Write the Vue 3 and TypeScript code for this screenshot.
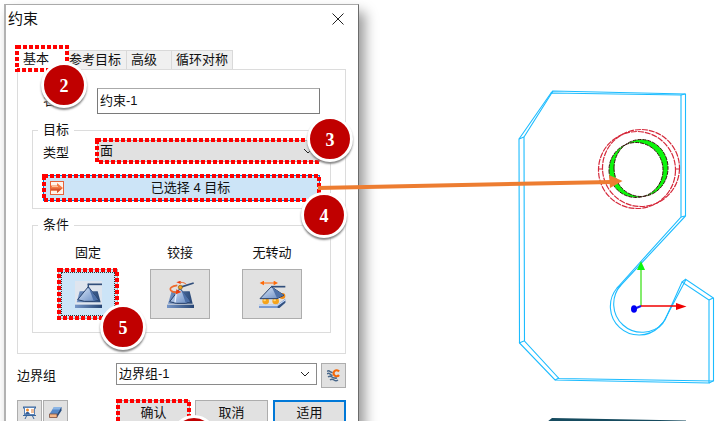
<script setup lang="ts">
import { ref } from 'vue'

type OptionId = 'fixed' | 'hinge' | 'slide'

const tabs: string[] = ['基本', '参考目标', '高级', '循环对称']
const activeTab = ref<string>('基本')
const constraintName = ref<string>('约束-1')
const targetType = ref<string>('面')
const boundaryGroup = ref<string>('边界组-1')
const conditions: { id: OptionId; label: string }[] = [
  { id: 'fixed', label: '固定' },
  { id: 'hinge', label: '铰接' },
  { id: 'slide', label: '无转动' },
]
const condition = ref<OptionId>('fixed')
</script>

<template>
  <main class="workspace">
    <section class="dialog" role="dialog" aria-labelledby="dialog-title">
      <header class="titlebar">
        <h1 id="dialog-title">约束</h1>
        <button class="close" type="button" aria-label="关闭">
          <svg width="12" height="12" viewBox="0 0 12 12"><path d="M0.5 0.5 11.5 11.5M11.5 0.5 0.5 11.5" /></svg>
        </button>
      </header>

      <form class="body" @submit.prevent>
        <div class="tabs" role="tablist">
          <button
            v-for="tab in tabs"
            :key="tab"
            type="button"
            role="tab"
            class="tab"
            :class="{ active: tab === activeTab }"
            :aria-selected="tab === activeTab"
            @click="activeTab = tab"
          >
            {{ tab }}
            <template v-if="tab === '基本'">
              <svg class="mark"><rect width="100%" height="100%" /></svg>
              <span class="badge badge-tab">2</span>
            </template>
          </button>
        </div>

        <div class="panel" role="tabpanel">
          <div class="row name-row">
            <label for="name">名称</label>
            <input id="name" v-model="constraintName" type="text" />
          </div>

          <fieldset>
            <legend>目标</legend>
            <div class="row type-row">
              <label for="type">类型</label>
              <div class="picker type-picker">
                <select id="type" v-model="targetType">
                  <option>面</option>
                  <option>边</option>
                </select>
                <svg class="chevron" width="10" height="6" viewBox="0 0 10 6"><path d="M1 1 5 5 9 1" /></svg>
                <svg class="mark"><rect width="100%" height="100%" /></svg>
                <span class="badge badge-type">3</span>
              </div>
            </div>
            <button class="targets" type="button">
              <svg class="target-icon" width="14" height="14" viewBox="0 0 14 14">
                <rect x="0.5" y="0.5" width="13" height="13" fill="#fff3ea" stroke="#e8623a" />
                <path d="M1 4.5H7V2L13 7 7 12V9.5H1Z" fill="#f47b45" />
                <path d="M1 7.5H12L7 12V9.5H1Z" fill="#d9532c" />
                <path d="M2 5.5H8" stroke="#ffc09a" />
              </svg>
              <span>已选择 4 目标</span>
              <svg class="mark"><rect width="100%" height="100%" /></svg>
              <span class="badge badge-targets">4</span>
            </button>
          </fieldset>

          <fieldset>
            <legend>条件</legend>
            <div class="options">
              <div v-for="item in conditions" :key="item.id" class="option">
                <label :for="item.id">{{ item.label }}</label>
                <button
                  :id="item.id"
                  type="button"
                  :class="{ chosen: item.id === condition }"
                  :aria-pressed="item.id === condition"
                  @click="condition = item.id"
                >
                  <svg v-if="item.id === 'fixed'" width="27" height="27" viewBox="0 0 81 81">
                    <defs>
                      <linearGradient id="steel" x1="0" y1="0" x2="1" y2="1">
                        <stop offset="0" stop-color="#dce9fb" />
                        <stop offset="1" stop-color="#6488c0" />
                      </linearGradient>
                      <linearGradient id="plate" x1="0" y1="0" x2="1" y2="0">
                        <stop offset="0" stop-color="#7696c8" />
                        <stop offset="1" stop-color="#274675" />
                      </linearGradient>
                    </defs>
                    <rect width="81" height="81" fill="#dfe5ee" />
                    <path d="M14 31H68L77 64H5Z" fill="url(#plate)" />
                    <path d="M40 17 8 56 28 61H56L70 56Z" fill="url(#steel)" stroke="#29426c" stroke-width="3" />
                    <path d="M41 19 56 60 69 56Z" fill="#4d70a8" />
                    <path d="M38 10H81" stroke="#314e7b" stroke-width="5" />
                    <path d="M40 8V22" stroke="#314e7b" stroke-width="4" />
                    <rect y="71" width="81" height="10" fill="url(#plate)" />
                  </svg>
                  <svg v-else-if="item.id === 'hinge'" width="27" height="27" viewBox="0 0 81 81">
                    <path d="M14 31H68L77 68H3Z" fill="url(#plate)" />
                    <path d="M39 22 8 62 28 67H56L70 62Z" fill="url(#steel)" stroke="#29426c" stroke-width="3" />
                    <path d="M28 36 24 64" stroke="#e7f0fd" stroke-width="4" />
                    <path d="M42 24 56 65 69 61Z" fill="#4d70a8" />
                    <rect y="71" width="81" height="10" fill="url(#plate)" />
                    <path d="M31 13C14 15 6 22 12 29 17 34 27 35 36 33" fill="none" stroke="#ee6a2c" stroke-width="5" />
                    <path d="M28 25 43 33 27 40Z" fill="#ef3c0c" />
                    <path d="M28 4 41-1V9Z" fill="#ef3c0c" />
                    <path d="M40 4C49 4 54 6 58 10" fill="none" stroke="#ee6a2c" stroke-width="3" />
                    <path d="M39 19 80 6" stroke="#314e7b" stroke-width="5" />
                    <circle cx="40" cy="19" r="6" fill="#f2a21c" stroke="#81500e" stroke-width="2" />
                  </svg>
                  <svg v-else width="27" height="27" viewBox="0 0 81 81">
                    <path d="M0 71H55L79 53V65L61 81H0Z" fill="#7899d0" />
                    <path d="M0 73H56L79 57" fill="none" stroke="#d5e4fa" stroke-width="3" />
                    <path d="M56 76 79 59V65L61 81H56Z" fill="#34527f" />
                    <circle cx="20" cy="60" r="10" fill="#f5a31c" />
                    <circle cx="50" cy="60" r="10" fill="#f5a31c" />
                    <circle cx="70" cy="45" r="9" fill="#f08a16" />
                    <circle cx="17" cy="57" r="4" fill="#ffd56f" />
                    <circle cx="47" cy="57" r="4" fill="#ffd56f" />
                    <path d="M37 17 3 53H54L75 43Z" fill="url(#steel)" stroke="#29426c" stroke-width="3" />
                    <path d="M39 19 54 52 74 42Z" fill="#4f72a9" />
                    <path d="M36 17H79" stroke="#314e7b" stroke-width="5" />
                    <path d="M12 6H46" stroke="#ff6a08" stroke-width="3" />
                    <path d="M2 6 15-1V13ZM57 6 44-1V13Z" fill="#ff6a08" />
                  </svg>
                  <template v-if="item.id === 'fixed'">
                    <svg class="mark"><rect width="100%" height="100%" /></svg>
                    <span class="badge badge-fixed">5</span>
                  </template>
                </button>
              </div>
            </div>
          </fieldset>
        </div>

        <div class="row group-row">
          <label for="group">边界组</label>
          <div class="picker">
            <select id="group" v-model="boundaryGroup">
              <option>边界组-1</option>
            </select>
            <svg class="chevron" width="10" height="6" viewBox="0 0 10 6"><path d="M1 1 5 5 9 1" /></svg>
          </div>
          <button class="tool" type="button" aria-label="边界组设置">
            <svg width="13" height="13" viewBox="0 0 13 13">
              <path d="M0 2.500Q1.500 1 3 2.500T5.500 3M0 5Q1.500 3.500 3 5T5.500 6M1 8Q3 6.500 5 8T10 9M3 11Q5 9.500 7 11T11 11" fill="none" stroke="#48678a" stroke-width="1.5" />
              <path d="M12 2.500A3 3 0 1 0 12 6" fill="none" stroke="#f4690b" stroke-width="2.200" />
            </svg>
          </button>
        </div>

        <footer class="footer">
          <div class="tools">
            <button class="tool" type="button" aria-label="显示">
              <svg width="13" height="13" viewBox="0 0 13 13">
                <path d="M0 1.5H13" stroke="#38659c" stroke-width="2" />
                <rect x="1.5" y="1.5" width="10" height="7" fill="#fff" stroke="#5a82b5" />
                <circle cx="4.5" cy="4" r="1.5" fill="#f08b2c" />
                <path d="M2 8Q4.500 3.500 7 8Z" fill="#365e96" />
                <path d="M8 4H11M8 6H11" stroke="#de7c35" />
                <path d="M0 9.500H13M4 9 2 13M9 9 11 13" stroke="#38659c" />
              </svg>
            </button>
            <button class="tool" type="button" aria-label="清除">
              <svg width="13" height="13" viewBox="0 0 13 13">
                <path d="M5 1H12.500L8 8H0.500Z" fill="#5689c9" />
                <path d="M5 1H12.500L11 3.500H3.500Z" fill="#8bb5e5" />
                <path d="M12.500 1V4.500L8 11.500V8Z" fill="#244b7f" />
                <path d="M0.500 8H8V11.500H0.500Z" fill="#f5b789" stroke="#7c4e3e" stroke-width="0.8" />
              </svg>
            </button>
          </div>
          <div class="actions">
            <button type="submit">
              确认
              <svg class="mark"><rect width="100%" height="100%" /></svg>
              <span class="badge badge-ok"></span>
            </button>
            <button type="button">取消</button>
            <button class="primary" type="button">适用</button>
          </div>
        </footer>
      </form>
    </section>

    <svg class="scene" viewBox="0 0 716 421" preserveAspectRatio="xMinYMin meet" aria-hidden="true">
      <g class="wire">
        <path d="M519 139 551 93 681 95V217L617 288A28.700 28.700 0 0 0 659 327L665 320 682 282 709 300V383L555 380 519.500 343Z" />
        <path d="M524 137 553 91 685.500 94V216L621 285A28.300 28.300 0 0 0 663 323L686 279.500 713.500 298V381L559 378.500 524.500 341Z" />
        <path d="M519 139 524 137M551 93 553 91M681 95 685 94M681 217 685 216M617 288 621 285M659 327 663 323M682 282 686 279M709 300 713 298M709 383 713 381M555 380 559 378M519 343 524 341" />
      </g>

      <g class="hole-rim">
        <circle cx="637" cy="170" r="38.500" />
        <circle cx="641" cy="168" r="38.500" />
        <path d="M598 169H603M675 169H680" />
      </g>
      <path
        class="hole"
        fill-rule="evenodd"
        d="M609 170a27 27.500 0 1 0 54 0a27 27.500 0 1 0-54 0ZM614 168a27 28.500 0 1 0 54 0a27 28.500 0 1 0-54 0Z"
      />

      <g>
        <path d="M641 306V269" stroke="#5be63e" stroke-width="1.5" />
        <path d="M641 261 645 270H637Z" fill="#0cf50c" />
        <path d="M641 306H677" stroke="#f00000" stroke-width="1.5" />
        <path d="M676 303 686.500 306.500 676 310Z" fill="#f00000" />
        <path d="M641 306 634 309" stroke="#1717ee" stroke-width="2" />
        <ellipse cx="634" cy="309" rx="3" ry="3.800" fill="#0000f4" />
      </g>

      <path d="M547 422 552 418 686 420.500V422Z" fill="#164b5f" />

      <path d="M318 188 612 182" stroke="#ed7d31" stroke-width="4" />
      <path d="M609 175 622.500 181 610 188Z" fill="#ed7d31" />
    </svg>
  </main>
</template>

<style>
body {
  margin: 0;
  overflow: hidden;
  background: #fff;
}
</style>

<style scoped>
.workspace {
  position: relative;
  box-sizing: border-box;
  height: 100vh;
  padding: 4px 0 0 4px;
  overflow: hidden;
  font: 13px/18px "Liberation Sans", "Noto Sans CJK SC", sans-serif;
  color: #111;
}

.dialog {
  box-sizing: border-box;
  width: calc(50% - 1px);
  min-height: 100%;
  border: solid #777;
  border-width: 1px 1px 0 2px;
  border-color: #aaa #6b6b6b #aaa #b2b2b2;
  background: #fff;
  box-shadow: 6px 8px 12px rgba(0, 0, 0, 0.4);
}

.titlebar {
  display: flex;
  align-items: center;
  justify-content: space-between;
  height: 28px;
  padding: 0 14px 0 2px;
}

h1 {
  margin: 0;
  font-size: 15px;
  font-weight: 400;
}

button,
input,
select {
  box-sizing: border-box;
  margin: 0;
  padding: 0;
  border-radius: 0;
  color: inherit;
  font: inherit;
}

button {
  position: relative;
  border: 1px solid #adadad;
  background: #e1e1e1;
}

button > svg {
  display: block;
  margin: auto;
}

.close {
  border: 0;
  background: none;
}

.close path,
.chevron path {
  fill: none;
  stroke: #222;
}

.body {
  padding: 14px 12px 0 11px;
}

.tabs {
  display: flex;
  align-items: flex-end;
  height: 22px;
}

.tab {
  height: 19px;
  padding: 0 4px;
  border: 1px solid #d9d9d9;
  border-width: 1px 1px 0 0;
  background: #f0f0f0;
}

.tab:nth-child(2) {
  padding: 0 5px 0 1px;
}

.tab:nth-child(3) {
  padding: 0 14px 0 4px;
}

.tab.active {
  z-index: 1;
  height: 24px;
  margin-bottom: -1px;
  padding: 0 18px 0 6px;
  border-color: transparent;
  background: #fff;
}

.panel {
  padding: 18px 14px 20px;
  border: 1px solid #dcdcdc;
}

.row {
  display: flex;
  align-items: center;
}

.row > label {
  flex: none;
  width: 54px;
}

.name-row {
  margin-bottom: 6px;
  padding: 0 11px;
}

input {
  flex: 1;
  min-width: 0;
  height: 26px;
  padding: 0 2px 4px;
  border: 1px solid #7a7a7a;
  border-top-color: #aaa;
  background: #fff;
}

fieldset {
  min-width: 0;
  margin: 0 0 6px;
  padding: 0 10px 7px;
  border: 1px solid #dcdcdc;
}

fieldset:last-child {
  margin-bottom: 0;
  padding-bottom: 13px;
}

legend {
  margin-left: -5px;
  padding: 0 5px;
  line-height: 20px;
}

.type-row > label {
  padding-top: 4px;
}

.picker {
  position: relative;
  display: flex;
  flex: 1;
}

select {
  flex: 1;
  height: 22px;
  padding: 0 24px 0 2px;
  border: 1px solid #8a8a8a;
  appearance: none;
  background: #fff;
}

.type-picker select {
  border-color: #adadad;
  background: #e1e1e1;
}

.chevron {
  position: absolute;
  top: 8px;
  right: 7px;
  pointer-events: none;
}

.targets {
  display: block;
  width: 100%;
  height: 26px;
  margin-top: 13px;
  padding-left: 18px;
  border-color: #0078d7;
  background: #cce4f7;
}

.target-icon {
  position: absolute;
  top: 5px;
  left: 6px;
}

.options {
  display: flex;
  gap: 32px;
  padding: 9px 15px 0;
}

.option {
  display: flex;
  flex-direction: column;
  gap: 7px;
  width: 60px;
  text-align: center;
}

.option button {
  height: 50px;
}

.option button.chosen {
  outline: 1px dotted #333;
  outline-offset: -4px;
  background: #cce4f7;
}

.group-row {
  align-items: flex-start;
  gap: 4px;
  margin-top: 9px;
}

.group-row > label {
  width: 95px;
  padding-top: 4px;
}

.tool {
  width: 25px;
  height: 25px;
}

.footer {
  display: flex;
  justify-content: space-between;
  margin-top: 12px;
}

.tools {
  display: flex;
  gap: 1px;
}

.actions {
  display: flex;
  gap: 5px;
}

.actions button {
  width: 73px;
  height: 25px;
}

.actions .primary {
  border: 2px solid #0078d7;
}

.mark {
  position: absolute;
  inset: 0;
  width: 100%;
  height: 100%;
  overflow: visible;
  pointer-events: none;
}

.mark rect {
  fill: none;
  stroke: #f00;
  stroke-width: 4;
  stroke-dasharray: 4 2;
}

.badge {
  position: absolute;
  z-index: 2;
  box-sizing: border-box;
  width: 46px;
  height: 46px;
  border: 3px solid #fff;
  border-radius: 50%;
  background: #c00000;
  box-shadow: 0 2px 2px #888;
  color: #fff;
  font: bold 18px/42px "Liberation Serif", serif;
  text-align: center;
}

.badge-tab {
  top: 15px;
  left: 24px;
}

.badge-type {
  top: -24px;
  right: -33px;
}

.badge-targets {
  top: 16px;
  right: -28px;
}

.badge-fixed {
  top: 34px;
  left: 41px;
}

.badge-ok {
  top: 14px;
  left: 53px;
}

.scene {
  position: absolute;
  inset: 0;
  width: 100%;
  height: auto;
  pointer-events: none;
}

.wire path {
  fill: none;
  stroke: #1cbcff;
  stroke-width: 1.1;
}

.hole-rim {
  fill: none;
  stroke: #d5283a;
  stroke-width: 1.2;
  stroke-dasharray: 6 1;
}

.hole {
  fill: #0cf50c;
  stroke: #3a1010;
  stroke-dasharray: 4 1;
}
</style>
